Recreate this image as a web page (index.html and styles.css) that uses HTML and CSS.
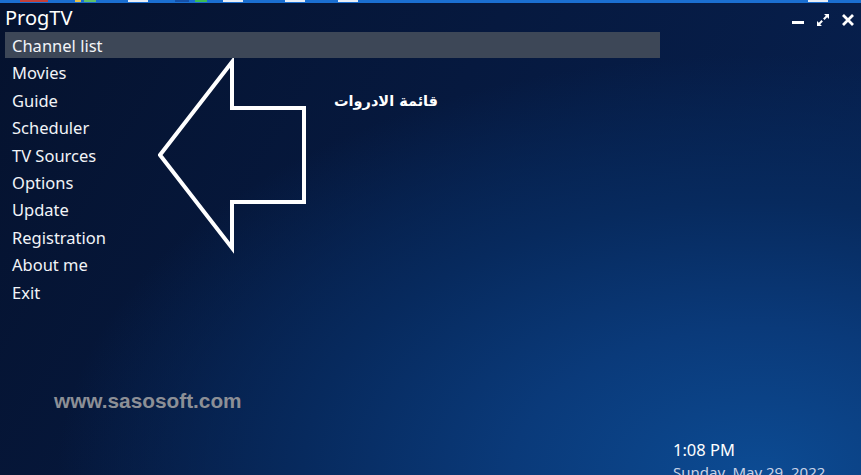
FILE: index.html
```html
<!DOCTYPE html>
<html lang="en">
<head>
    <meta charset="UTF-8">
    <title>ProgTV</title>
    <link rel="stylesheet" href="styles.css">
</head>
<body>
    <div class="screen">
        <div class="taskbar">
            <span class="tb-icon red"></span>
            <span class="tb-icon yellow"></span>
            <span class="tb-icon green"></span>
            <span class="tb-icon white w1"></span>
            <span class="tb-icon blue"></span>
            <span class="tb-icon green2"></span>
            <span class="tb-icon white w2"></span>
            <span class="tb-icon white w3"></span>
            <span class="tb-icon white w4"></span>
            <span class="tb-icon white w5"></span>
        </div>

        <div class="titlebar">
            <div class="title">ProgTV</div>
            <div class="controls">
                <svg class="ctrl" width="14" height="14" viewBox="0 0 14 14">
                    <rect x="1" y="8" width="12" height="3" fill="#fff"/>
                </svg>
                <svg class="ctrl" width="14" height="14" viewBox="0 0 14 14">
                    <path d="M8 1h5v5l-1.8-1.8-2.7 2.7-1.4-1.4 2.7-2.7z" fill="#fff"/>
                    <path d="M6 13H1V8l1.8 1.8 2.7-2.7 1.4 1.4-2.7 2.7z" fill="#fff"/>
                </svg>
                <svg class="ctrl" width="14" height="14" viewBox="0 0 14 14">
                    <path d="M2 2l10 10M12 2L2 12" stroke="#fff" stroke-width="2.8"/>
                </svg>
            </div>
        </div>

        <ul class="menu">
            <li class="active">Channel list</li>
            <li>Movies</li>
            <li>Guide</li>
            <li>Scheduler</li>
            <li>TV Sources</li>
            <li>Options</li>
            <li>Update</li>
            <li>Registration</li>
            <li>About me</li>
            <li>Exit</li>
        </ul>

        <svg class="arrow" width="160" height="200" viewBox="0 0 160 200">
            <polygon points="74,4 74,50 146,50 146,144 74,144 74,190 2,97" fill="none" stroke="#fff" stroke-width="4" stroke-linejoin="miter"/>
        </svg>
        <div class="note" dir="rtl">قائمة الادروات</div>

        <div class="footer">
            <div class="site">www.sasosoft.com</div>
            <div class="clock">
                <div class="time">1:08 PM</div>
                <div class="date">Sunday, May 29, 2022</div>
            </div>
        </div>
    </div>
</body>
</html>
```

FILE: styles.css
```css
body {
    margin: 0;
    padding: 0;
    font-family: "Noto Sans", "Open Sans", sans-serif;
    color: #fff;
}
.screen {
    position: relative;
    width: 861px;
    height: 475px;
    overflow: hidden;
    background:
        radial-gradient(ellipse 700px 420px at 88% 100%, #0c4b93 0%, #0a3a7a 35%, #072a5e 65%, rgba(6, 27, 66, 0) 100%),
        linear-gradient(120deg, #05122e 0%, #06193f 45%, #072253 100%);
}
.taskbar {
    height: 3px;
    background: #1b6fd1;
    position: relative;
}
.tb-icon {
    position: absolute;
    top: 0;
    height: 2px;
}
.red { left: 20px; width: 28px; background: #c4403a; }
.yellow { left: 75px; width: 6px; background: #e7c14a; }
.green { left: 84px; width: 12px; background: #5fbf6a; }
.white { background: #e8eef7; width: 20px; }
.w1 { left: 128px; }
.blue { left: 175px; width: 14px; background: #1450a8; }
.green2 { left: 195px; width: 12px; background: #3dbb55; }
.w2 { left: 223px; }
.w3 { left: 285px; }
.w4 { left: 338px; }
.w5 { left: 808px; }
.titlebar {
    display: flex;
    justify-content: space-between;
    align-items: center;
    height: 29px;
    padding: 0 6px 0 5px;
}
.title {
    font-size: 20px;
    line-height: 29px;
}
.controls {
    display: flex;
    gap: 11px;
    align-items: center;
    padding-top: 4px;
}
.menu {
    list-style: none;
    margin: 0 0 0 5px;
    padding: 0;
    width: 655px;
}
.menu li {
    height: 27.4px;
    line-height: 28px;
    padding-left: 7px;
    font-size: 16.5px;
    color: #f2f4f8;
}
.menu li.active {
    background: #3d4757;
    height: 26px;
    margin-bottom: 1.4px;
}
.arrow {
    position: absolute;
    left: 158px;
    top: 58px;
}
.note {
    position: absolute;
    left: 334px;
    top: 93px;
    font-family: "DejaVu Sans", sans-serif;
    font-weight: bold;
    font-size: 14.5px;
}
.footer {
    display: flex;
    justify-content: space-between;
    padding: 83px 0 0 54px;
}
.site {
    font-family: "Liberation Sans", Arial, sans-serif;
    font-weight: bold;
    font-size: 20.8px;
    color: #8c8f96;
}
.clock {
    width: 188px;
    padding-top: 51px;
    white-space: nowrap;
}
.time {
    font-size: 16.5px;
    line-height: 20px;
}
.date {
    font-size: 15px;
    color: #c9d3e6;
    line-height: 24px;
}
```
